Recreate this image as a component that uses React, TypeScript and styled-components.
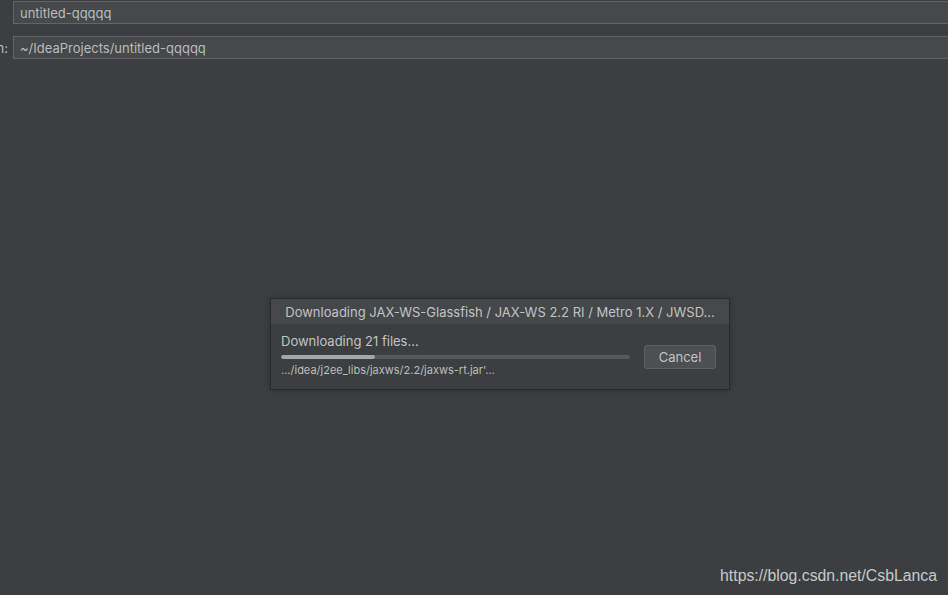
import React from "react";
import styled, { createGlobalStyle } from "styled-components";

const GlobalStyle = createGlobalStyle`
    html, body {
        margin: 0;
        padding: 0;
        background: #3c3f41;
        overflow: hidden;
    }
    * {
        box-sizing: border-box;
    }
    body {
        font-family: Inter, "Noto Sans", "Liberation Sans", sans-serif;
        color: #bbbbbb;
    }
`;

const App = () => {
    const progress = 27;
    return (
        <>
            <GlobalStyle />
            <Page>
                <Form>
                    <Label />
                    <Field>untitled-qqqqq</Field>
                    <Label>
                        <span>Location:</span>
                    </Label>
                    <Field>~/IdeaProjects/untitled-qqqqq</Field>
                </Form>
                <Dialog>
                    <TitleBar>
                        Downloading JAX-WS-Glassfish / JAX-WS 2.2 RI / Metro 1.X
                        / JWSD...
                    </TitleBar>
                    <Body>
                        <ProgressColumn>
                            <Status>Downloading 21 files...</Status>
                            <Track>
                                <Fill style={{ width: `${progress}%` }} />
                            </Track>
                            <FilePath>
                                .../idea/j2ee_libs/jaxws/2.2/jaxws-rt.jar'...
                            </FilePath>
                        </ProgressColumn>
                        <CancelButton>Cancel</CancelButton>
                    </Body>
                </Dialog>
                <Watermark>https://blog.csdn.net/CsbLanca</Watermark>
            </Page>
        </>
    );
};

const Page = styled.div`
    position: relative;
    width: 948px;
    height: 595px;
    overflow: hidden;
`;

const Form = styled.div`
    display: grid;
    grid-template-columns: 13px 1fr;
    row-gap: 12px;
    padding-top: 1px;
    margin-right: -4px;
`;

const Label = styled.div`
    display: flex;
    justify-content: flex-end;
    align-items: center;
    min-width: 0;
    white-space: nowrap;
    font-size: 13px;
    padding-right: 5px;
    color: #bbbbbb;
`;

const Field = styled.div`
    height: 23px;
    display: flex;
    align-items: center;
    padding-left: 6px;
    background: #45494a;
    border: 1px solid #646464;
    font-size: 13px;
    color: #bbbbbb;
`;

const Dialog = styled.div`
    width: 460px;
    margin: 239px 0 0 270px;
    border: 1px solid #2a2b2c;
    background: #3c3f41;
    box-shadow: 0 0 6px rgba(0, 0, 0, 0.25);
`;

const TitleBar = styled.div`
    height: 25px;
    display: flex;
    align-items: center;
    justify-content: center;
    background: #45484a;
    font-size: 13px;
    color: #c2c2c2;
    white-space: nowrap;
`;

const Body = styled.div`
    display: flex;
    align-items: flex-start;
    gap: 14px;
    padding: 9px 13px 12px 10px;
`;

const ProgressColumn = styled.div`
    width: 349px;
    display: flex;
    flex-direction: column;
`;

const Status = styled.div`
    font-size: 13px;
    line-height: 17px;
    color: #c2c2c2;
`;

const Track = styled.div`
    height: 4px;
    margin-top: 5px;
    border-radius: 2px;
    background: #555758;
    overflow: hidden;
`;

const Fill = styled.div`
    height: 100%;
    background: #a6a6a6;
    border-radius: 2px;
`;

const FilePath = styled.div`
    margin-top: 4px;
    font-size: 11px;
    line-height: 14px;
    color: #bdbdbd;
`;

const CancelButton = styled.button`
    width: 72px;
    height: 24px;
    margin-top: 12px;
    background: #4c5052;
    border: 1px solid #5e6060;
    border-radius: 3px;
    color: #c2c2c2;
    font-family: inherit;
    font-size: 13px;
    padding: 0;
`;

const Watermark = styled.div`
    position: absolute;
    right: 11px;
    bottom: 10px;
    font-family: "Liberation Sans", Arial, sans-serif;
    font-size: 15.8px;
    color: #c8c8c8;
`;

export default App;
